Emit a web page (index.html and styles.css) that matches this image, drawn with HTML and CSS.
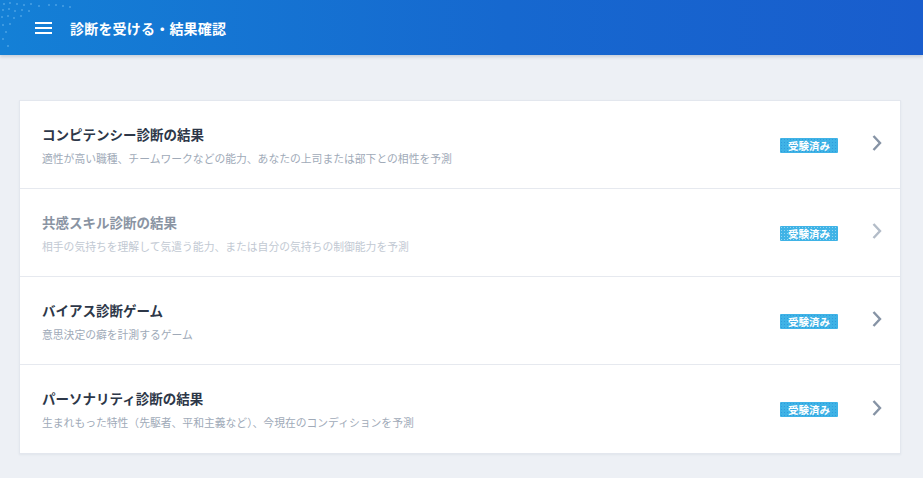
FILE: index.html
```html
<!DOCTYPE html>
<html lang="ja">
<head>
    <meta charset="UTF-8">
    <meta name="viewport" content="width=device-width, initial-scale=1.0">
    <title>診断を受ける・結果確認</title>
    <link rel="stylesheet" href="styles.css">
</head>
<body>
    <header class="fejlec">
        <svg class="pottyok" width="110" height="55" viewBox="0 0 110 55">
            <g fill="#6fb8f0">
                <circle cx="4" cy="4" r="0.8"/><circle cx="10" cy="3" r="0.8"/><circle cx="17" cy="4" r="0.8"/><circle cx="24" cy="5" r="0.8"/><circle cx="31" cy="4" r="0.8"/><circle cx="39" cy="6" r="0.8"/>
                <circle cx="3" cy="10" r="0.8"/><circle cx="9" cy="9" r="0.8"/><circle cx="15" cy="11" r="0.8"/><circle cx="22" cy="10" r="0.8"/><circle cx="29" cy="11" r="0.8"/>
                <circle cx="2" cy="17" r="0.8"/><circle cx="8" cy="16" r="0.8"/><circle cx="14" cy="18" r="0.8"/><circle cx="21" cy="16" r="0.8"/>
                <circle cx="3" cy="25" r="0.8"/><circle cx="10" cy="24" r="0.8"/><circle cx="6" cy="32" r="0.8"/><circle cx="3" cy="39" r="0.8"/><circle cx="8" cy="46" r="0.8"/>
                <circle cx="49" cy="5" r="0.8"/><circle cx="56" cy="5" r="0.8"/><circle cx="63" cy="6" r="0.8"/><circle cx="70" cy="7" r="0.8"/>
            </g>
        </svg>
        <span class="menu-gomb">
            <span></span><span></span><span></span>
        </span>
        <h1>診断を受ける・結果確認</h1>
    </header>

    <main class="tartalom">
        <div class="lista">
            <div class="sor">
                <div class="szoveg">
                    <h2>コンピテンシー診断の結果</h2>
                    <p>適性が高い職種、チームワークなどの能力、あなたの上司または部下との相性を予測</p>
                </div>
                <span class="cimke">受験済み</span>
                <svg class="nyil" width="12" height="18" viewBox="0 0 12 18"><path d="M2.5 2 L9 9 L2.5 16" fill="none" stroke="#8693a5" stroke-width="2.4"/></svg>
            </div>
            <div class="sor halvany">
                <div class="szoveg">
                    <h2>共感スキル診断の結果</h2>
                    <p>相手の気持ちを理解して気遣う能力、または自分の気持ちの制御能力を予測</p>
                </div>
                <span class="cimke">受験済み</span>
                <svg class="nyil" width="12" height="18" viewBox="0 0 12 18"><path d="M2.5 2 L9 9 L2.5 16" fill="none" stroke="#8693a5" stroke-width="2.4"/></svg>
            </div>
            <div class="sor">
                <div class="szoveg">
                    <h2>バイアス診断ゲーム</h2>
                    <p>意思決定の癖を計測するゲーム</p>
                </div>
                <span class="cimke">受験済み</span>
                <svg class="nyil" width="12" height="18" viewBox="0 0 12 18"><path d="M2.5 2 L9 9 L2.5 16" fill="none" stroke="#8693a5" stroke-width="2.4"/></svg>
            </div>
            <div class="sor">
                <div class="szoveg">
                    <h2>パーソナリティ診断の結果</h2>
                    <p>生まれもった特性（先駆者、平和主義など）、今現在のコンディションを予測</p>
                </div>
                <span class="cimke">受験済み</span>
                <svg class="nyil" width="12" height="18" viewBox="0 0 12 18"><path d="M2.5 2 L9 9 L2.5 16" fill="none" stroke="#8693a5" stroke-width="2.4"/></svg>
            </div>
        </div>
    </main>
</body>
</html>
```

FILE: styles.css
```css
* {
    box-sizing: border-box;
    margin: 0;
    padding: 0;
}

body {
    font-family: "Noto Sans CJK JP", "Noto Sans", sans-serif;
    background-color: #edf0f5;
    min-height: 100vh;
}

.fejlec {
    position: relative;
    height: 55px;
    display: flex;
    align-items: center;
    padding-left: 35px;
    background: linear-gradient(90deg, #1480d6 0%, #1668cf 55%, #195dcd 100%);
    box-shadow: 0 2px 3px rgba(40, 60, 90, 0.18);
    color: white;
}

.pottyok {
    position: absolute;
    left: 0;
    top: 0;
}

.menu-gomb {
    display: flex;
    flex-direction: column;
    gap: 3px;
    width: 17px;
    margin-right: 18px;
}

.menu-gomb span {
    height: 2px;
    background: white;
}

.fejlec h1 {
    font-size: 14px;
    font-weight: bold;
    letter-spacing: 0.2px;
}

.tartalom {
    padding: 45px 22px 0 19px;
}

.lista {
    background: white;
    border: 1px solid #e3e7ee;
    box-shadow: 0 1px 2px rgba(40, 60, 90, 0.06);
}

.sor {
    display: flex;
    align-items: center;
    height: 88px;
    padding: 0 17px 0 22px;
    border-bottom: 1px solid #e6e9ef;
}

.sor:last-child {
    border-bottom: none;
}

.szoveg {
    flex: 1;
}

.szoveg h2 {
    font-size: 13.5px;
    font-weight: bold;
    color: #2d3748;
    line-height: 20px;
}

.szoveg p {
    margin-top: 6px;
    font-size: 10.8px;
    color: #a0aab8;
    line-height: 16px;
}

.halvany .szoveg h2 {
    color: #8a94a3;
}

.halvany .szoveg p {
    color: #c2c9d3;
}

.cimke {
    display: inline-block;
    width: 58px;
    height: 15px;
    line-height: 15px;
    text-align: center;
    font-size: 10.5px;
    font-weight: bold;
    color: white;
    background-color: #3fb3e6;
    background-image: radial-gradient(rgba(20, 110, 200, 0.35) 0.6px, transparent 0.8px);
    background-size: 3px 3px;
    border-radius: 1px;
    margin-right: 33px;
    margin-top: 1px;
}

.halvany .cimke {
    background-image: radial-gradient(rgba(255, 255, 255, 0.45) 0.6px, transparent 0.8px);
}

.nyil {
    display: block;
    margin-top: -3px;
}

.halvany .nyil path {
    stroke: #b3bcc8;
}
```
